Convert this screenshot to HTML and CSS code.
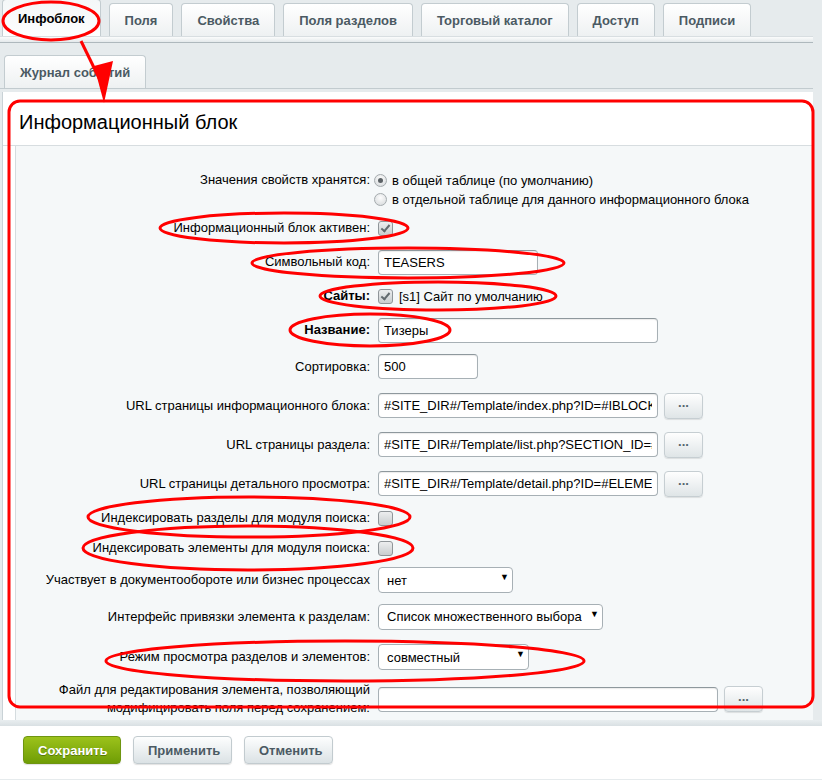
FILE: index.html
```html
<!DOCTYPE html>
<html lang="ru">
<head>
  <meta charset="UTF-8" />
  <title>Информационный блок</title>
  <link rel="stylesheet" href="styles.css">
</head>
<body>
  <div class="page">
    <div class="tabs">
      <div class="tab active">Инфоблок</div>
      <div class="tab">Поля</div>
      <div class="tab">Свойства</div>
      <div class="tab">Поля разделов</div>
      <div class="tab">Торговый каталог</div>
      <div class="tab">Доступ</div>
      <div class="tab">Подписи</div>
    </div>
    <div class="tabs-line"></div>
    <div class="subtabs">
      <div class="tab">Журнал событий</div>
    </div>

    <div class="panel">
      <h2 class="panel-title">Информационный блок</h2>
      <div class="form">
        <div class="row row-radio">
          <div class="label">Значения свойств хранятся:</div>
          <div class="field options">
            <label class="option"><span class="radio on"></span>в общей таблице (по умолчанию)</label>
            <label class="option"><span class="radio"></span>в отдельной таблице для данного информационного блока</label>
          </div>
        </div>
        <div class="row">
          <div class="label">Информационный блок активен:</div>
          <div class="field"><span class="check on"></span></div>
        </div>
        <div class="row">
          <div class="label">Символьный код:</div>
          <div class="field"><input class="text w160" type="text" value="TEASERS"></div>
        </div>
        <div class="row">
          <div class="label"><b>Сайты:</b></div>
          <div class="field"><span class="check on"></span>[s1] Сайт по умолчанию</div>
        </div>
        <div class="row">
          <div class="label"><b>Название:</b></div>
          <div class="field"><input class="text w280" type="text" value="Тизеры"></div>
        </div>
        <div class="row row-wide">
          <div class="label">Сортировка:</div>
          <div class="field"><input class="text w100" type="text" value="500"></div>
        </div>
        <div class="row row-wide">
          <div class="label">URL страницы информационного блока:</div>
          <div class="field">
            <input class="text w280" type="text" value="#SITE_DIR#/Template/index.php?ID=#IBLOCK_ID#">
            <button class="dots">...</button>
          </div>
        </div>
        <div class="row row-wide">
          <div class="label">URL страницы раздела:</div>
          <div class="field">
            <input class="text w280" type="text" value="#SITE_DIR#/Template/list.php?SECTION_ID=#SECTION_ID#">
            <button class="dots">...</button>
          </div>
        </div>
        <div class="row row-wide">
          <div class="label">URL страницы детального просмотра:</div>
          <div class="field">
            <input class="text w280" type="text" value="#SITE_DIR#/Template/detail.php?ID=#ELEMENT_ID#">
            <button class="dots">...</button>
          </div>
        </div>
        <div class="row row-check">
          <div class="label">Индексировать разделы для модуля поиска:</div>
          <div class="field"><span class="check"></span></div>
        </div>
        <div class="row row-check">
          <div class="label">Индексировать элементы для модуля поиска:</div>
          <div class="field"><span class="check"></span></div>
        </div>
        <div class="row">
          <div class="label">Участвует в документообороте или бизнес процессах</div>
          <div class="field">
            <span class="select"><select class="w135"><option>нет</option></select></span>
          </div>
        </div>
        <div class="row row-wide">
          <div class="label">Интерфейс привязки элемента к разделам:</div>
          <div class="field">
            <span class="select"><select class="w225"><option>Список множественного выбора</option></select></span>
          </div>
        </div>
        <div class="row row-tall">
          <div class="label">Режим просмотра разделов и элементов:</div>
          <div class="field">
            <span class="select"><select class="w151"><option>совместный</option></select></span>
          </div>
        </div>
        <div class="row row-tall">
          <div class="label two-lines">Файл для редактирования элемента, позволяющий<br>модифицировать поля перед сохранением:</div>
          <div class="field">
            <input class="text w340" type="text" value="">
            <button class="dots">...</button>
          </div>
        </div>
      </div>
    </div>
  </div>

  <div class="form-bottom"></div>
  <div class="buttons">
    <button class="btn btn-save">Сохранить</button>
    <button class="btn">Применить</button>
    <button class="btn">Отменить</button>
  </div>

  <!-- red pen marks drawn over the form -->
  <svg class="marks" width="822" height="780" viewBox="0 0 822 780">
    <g fill="none" stroke="#f00" stroke-width="3">
      <ellipse cx="51" cy="21" rx="48" ry="19" />
      <line x1="81" y1="41" x2="100" y2="80" />
      <rect x="9" y="101" width="804" height="606" rx="11" />
      <ellipse cx="284" cy="228" rx="124" ry="15" />
      <ellipse cx="408" cy="263" rx="156" ry="15" />
      <ellipse cx="438" cy="296" rx="118" ry="14" />
      <ellipse cx="370" cy="330" rx="80" ry="16" />
      <ellipse cx="249" cy="517" rx="161" ry="20" />
      <ellipse cx="248" cy="548" rx="165" ry="22" />
      <ellipse cx="345" cy="661" rx="239" ry="20" />
    </g>
    <polygon points="104,103 94,66 113,61" fill="#f00" />
  </svg>
</body>
</html>
```

FILE: styles.css
```css
:root {
  --border: #c3ccd0;
  --text: #000;
  --tab-text: #4b5a63;
  --form-bg: #f5f8f9;
  --font: "Liberation Sans", Arial, sans-serif;
}

body {
  margin: 0;
  font-family: var(--font);
  font-size: 13px;
  color: var(--text);
  background: #e6ebed;
  position: relative;
  width: 822px;
  min-height: 780px;
}

.page {
  width: 813px;
}

/* tabs */
.tabs {
  display: flex;
  gap: 8px;
  padding: 3px 0 0 2px;
  height: 33px;
  align-items: flex-end;
}

.tab {
  height: 33px;
  line-height: 33px;
  padding: 0 15px;
  box-sizing: border-box;
  border: 1px solid var(--border);
  border-bottom: none;
  border-radius: 4px 4px 0 0;
  background: linear-gradient(#ffffff, #eef1f2);
  color: var(--tab-text);
  font-weight: bold;
  white-space: nowrap;
}

.tab.active {
  height: 37px;
  margin-top: -3px;
  line-height: 38px;
  color: #000;
  background: linear-gradient(#f4f7f8, #fdfefe);
}

.tabs-line {
  height: 5px;
  background: linear-gradient(#fbfcfc, #e4e9eb);
  border-top: 1px solid #d8dee1;
  border-bottom: 1px solid #aeb8bd;
}

.subtabs {
  display: flex;
  padding: 12px 0 0 4px;
  height: 33px;
  border-bottom: 1px solid #c2cbcf;
}

.subtabs .tab {
  padding: 0 15px;
}

/* main panel */
.panel {
  margin-top: 3px;
  margin-left: 2px;
  background: #fff;
  border-left: 1px solid #c9d2d6;
}

.panel-title {
  margin: 0;
  padding: 18px 0 11px 16px;
  font-size: 20px;
  font-weight: normal;
  line-height: 24px;
  border-bottom: 1px solid #d7dde0;
}

.form {
  margin-left: 12px;
  padding-top: 25px;
  background: var(--form-bg);
  border-left: 1px solid #d5dcdf;
}

.row {
  display: flex;
  align-items: center;
  height: 34px;
}

.row-radio {
  align-items: flex-start;
  height: 40px;
}

.row-check { height: 30px; }
.row-wide { height: 39px; }
.row-tall { height: 42px; }

.label {
  width: 354px;
  flex: none;
  text-align: right;
  line-height: 18px;
}

.field {
  padding-left: 8px;
  display: flex;
  align-items: center;
  gap: 6px;
  white-space: nowrap;
}

.options {
  flex-direction: column;
  align-items: flex-start;
  gap: 0;
  padding-left: 4px;
}

.option {
  display: flex;
  align-items: center;
  line-height: 19px;
}

/* radio and checkbox */
.radio {
  width: 11px;
  height: 11px;
  margin-right: 5px;
  border-radius: 50%;
  border: 1px solid #a5abae;
  background: radial-gradient(circle at 50% 35%, #fdfdfd, #d3d7d9);
  position: relative;
}

.radio.on::after {
  content: "";
  position: absolute;
  left: 3px;
  top: 3px;
  width: 5px;
  height: 5px;
  border-radius: 50%;
  background: #5c6266;
}

.check {
  width: 13px;
  height: 13px;
  border: 1px solid #8f9599;
  border-radius: 3px;
  background: linear-gradient(#eceeef, #c9cdcf);
  position: relative;
  flex: none;
}

.check.on::after {
  content: "";
  position: absolute;
  left: 4px;
  top: 1px;
  width: 3px;
  height: 7px;
  border: solid #626a6e;
  border-width: 0 2px 2px 0;
  transform: rotate(40deg);
}

/* inputs */
.text {
  height: 25px;
  box-sizing: border-box;
  padding: 0 5px;
  border: 1px solid #a7b0b5;
  border-top-color: #8e989d;
  border-radius: 4px;
  background: #fff;
  box-shadow: inset 0 1px 1px rgba(0, 0, 0, 0.08);
  font-family: var(--font);
  font-size: 13px;
  color: #000;
  outline: none;
}

.w100 { width: 100px; }
.w135 { width: 135px; }
.w151 { width: 151px; }
.w160 { width: 160px; }
.w225 { width: 225px; }
.w280 { width: 280px; }
.w340 { width: 340px; }

.dots {
  width: 39px;
  height: 26px;
  padding: 0 0 6px;
  border: 1px solid #c6ced2;
  border-radius: 4px;
  background: linear-gradient(#fefefe, #dfe5e7);
  box-shadow: 0 1px 1px rgba(0, 0, 0, 0.1);
  font-family: var(--font);
  font-size: 13px;
  font-weight: bold;
  color: #55656e;
}

.select {
  position: relative;
  display: inline-block;
}

.select select {
  height: 26px;
  padding: 0 20px 0 8px;
  border: 1px solid #a7b0b5;
  border-radius: 4px;
  background: #fff;
  appearance: none;
  -webkit-appearance: none;
  font-family: var(--font);
  font-size: 13px;
  color: #000;
}

.select::after {
  content: "▼";
  position: absolute;
  right: 4px;
  top: 5px;
  font-size: 9px;
  color: #000;
  pointer-events: none;
}

/* footer */
.form-bottom {
  height: 6px;
  background: linear-gradient(#e9eef0, #d9e0e3);
}

.buttons {
  display: flex;
  gap: 12px;
  padding: 10px 0 0 23px;
  height: 43px;
  background: #fff;
}

.btn {
  height: 28px;
  padding: 0 14px;
  border: 1px solid #c2cbcf;
  border-radius: 4px;
  background: linear-gradient(#fdfefe, #dbe2e5);
  box-shadow: 0 1px 1px rgba(0, 0, 0, 0.12);
  font-family: var(--font);
  font-size: 13px;
  font-weight: bold;
  color: #4b5a63;
}

.btn-save {
  width: 98px;
  border-color: #6e9510;
  background: linear-gradient(#9cc21b, #6f9d05);
  color: #fff;
  text-shadow: 0 1px 0 rgba(0, 0, 0, 0.3);
}

.btn:nth-child(2) { width: 99px; }
.btn:nth-child(3) { width: 89px; }

/* pen marks layer */
.marks {
  position: absolute;
  top: 0;
  left: 0;
  pointer-events: none;
}
```
